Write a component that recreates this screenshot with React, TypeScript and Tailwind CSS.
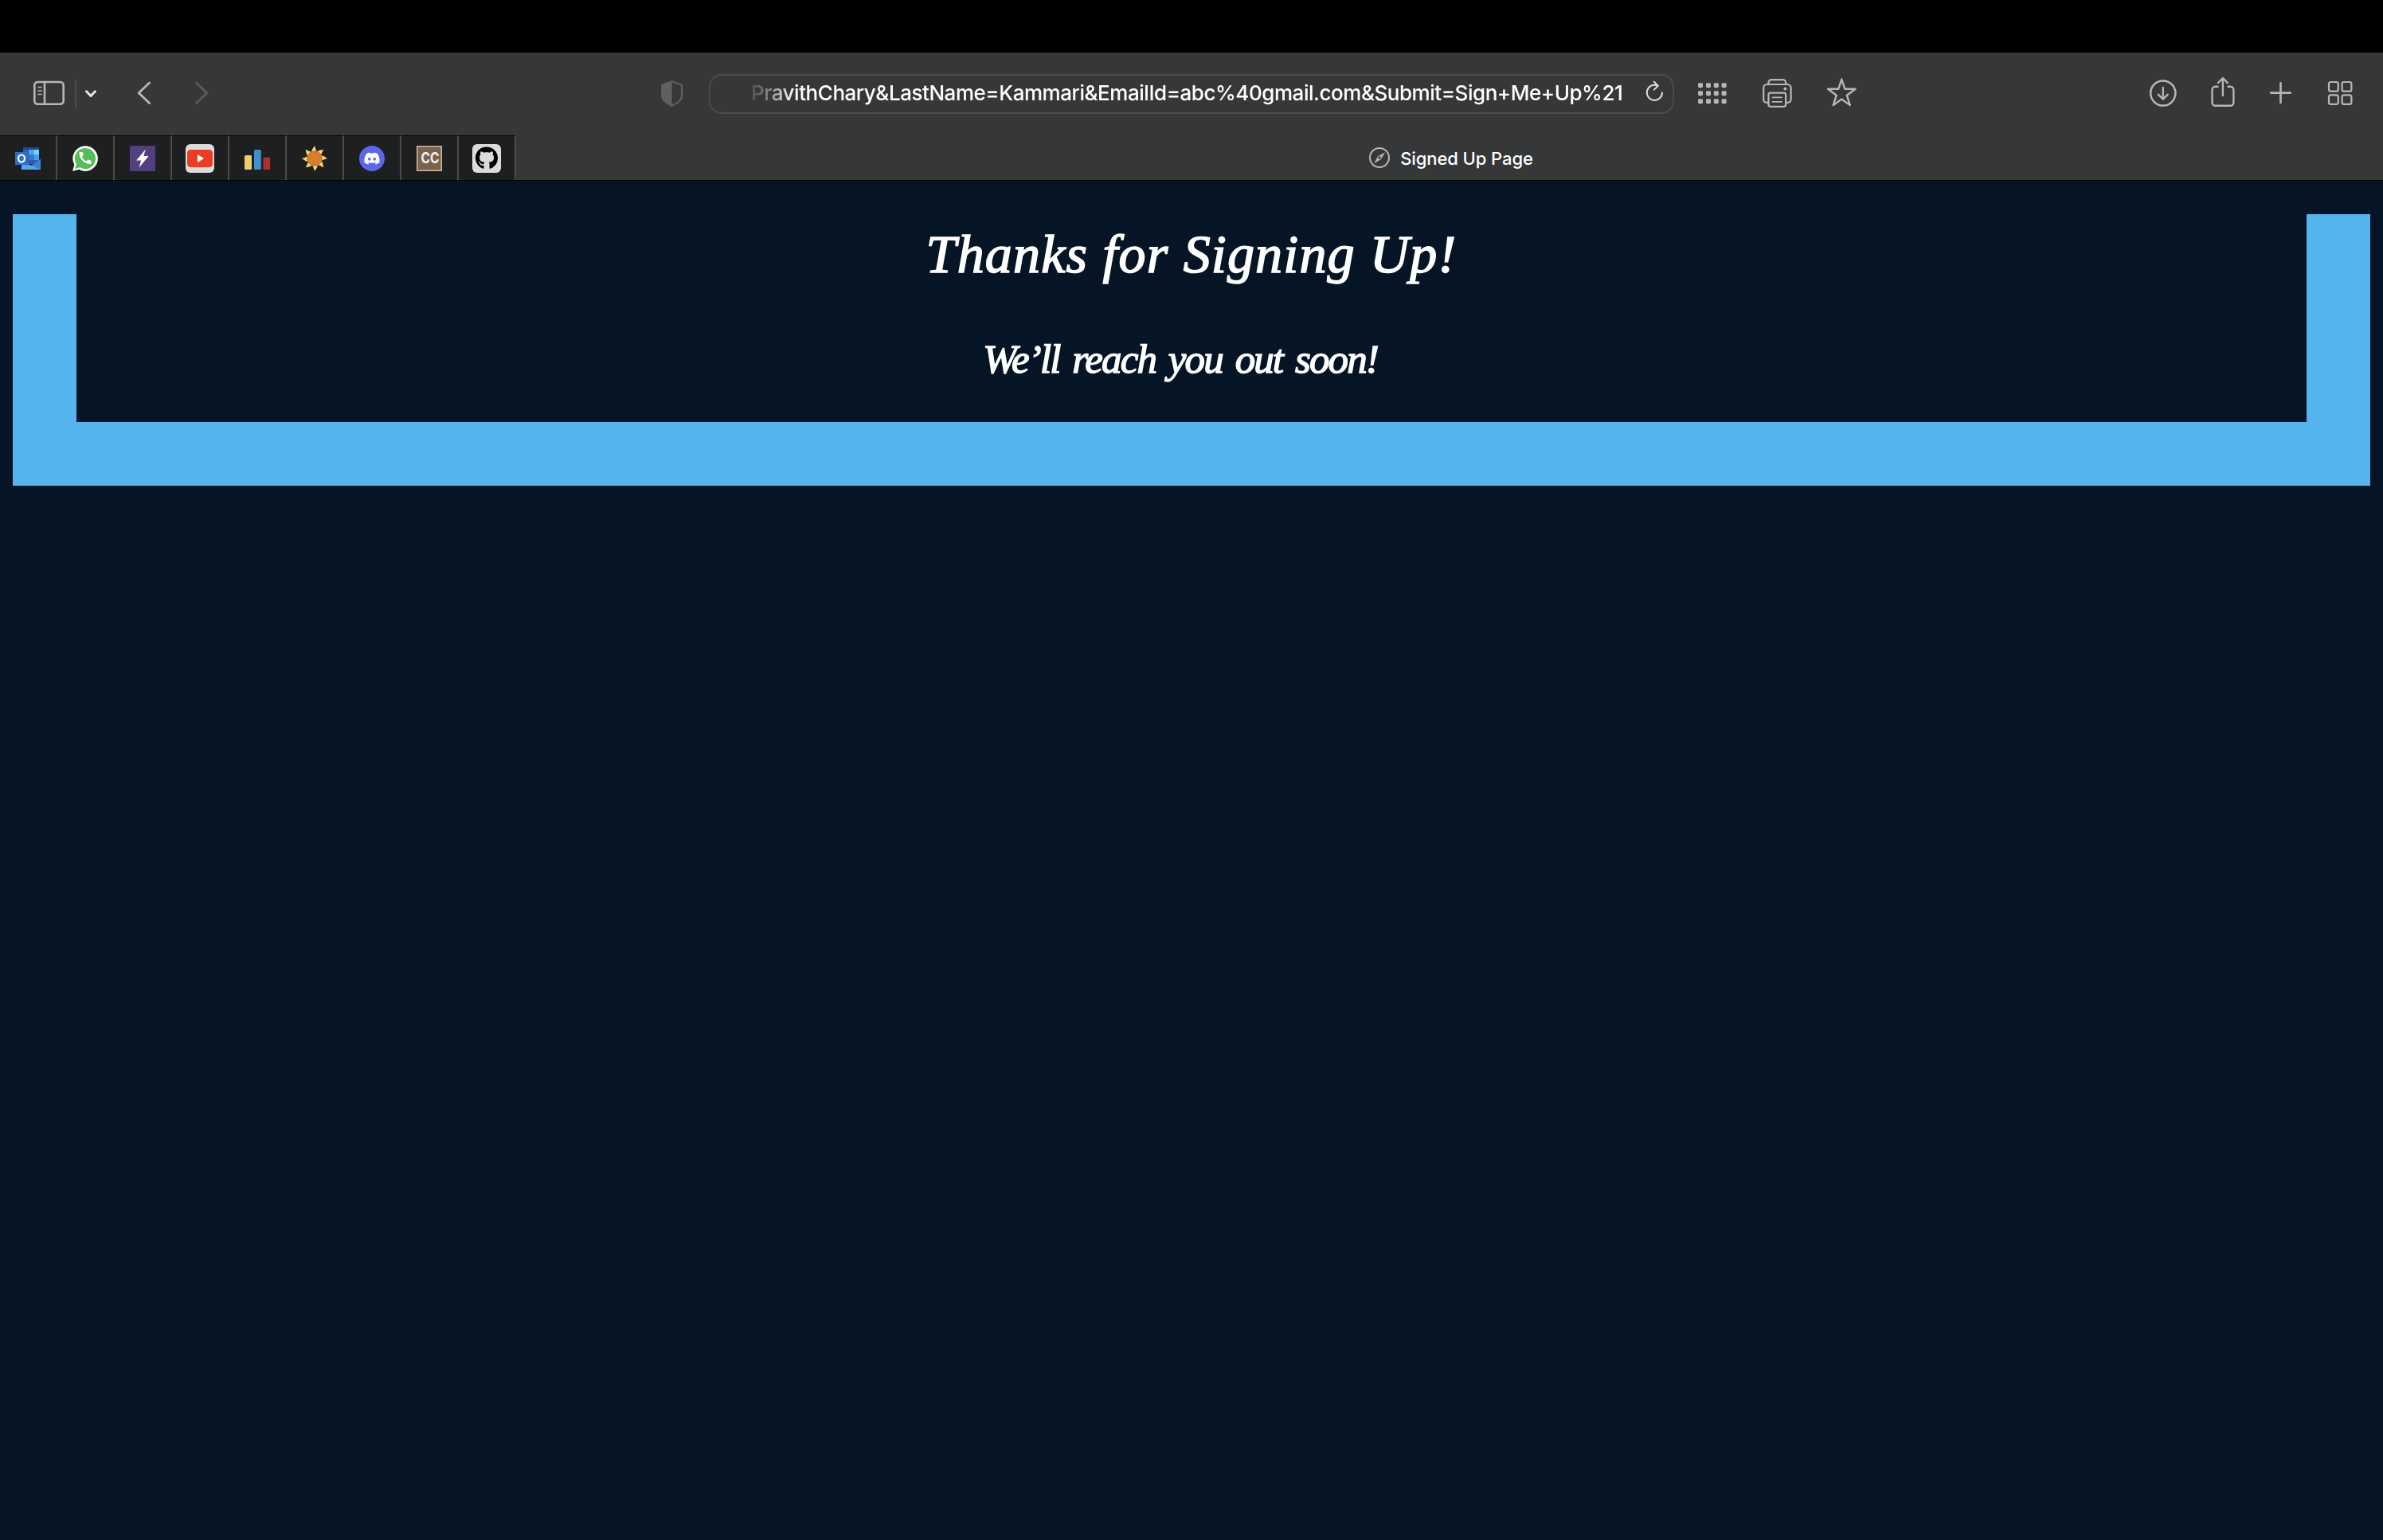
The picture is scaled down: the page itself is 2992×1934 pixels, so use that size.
import React from "react";
import { MdCall } from "react-icons/md";
import { SiDiscord } from "react-icons/si";
import { FaGithub } from "react-icons/fa";

const ICON = "#b6b7b8";

function Toolbar() {
  return (
    <div className="flex h-[104px] shrink-0 items-center bg-[#363739]">
      <svg className="ml-[36px] h-[104px] w-[52px] shrink-0" viewBox="36 66 52 104" fill="none" stroke={ICON} strokeWidth="2.6" strokeLinecap="round">
        <rect x="43.3" y="103" width="36.4" height="27.8" rx="4" />
        <path d="M56 103v27.8" />
        <path d="M48 109.5h4M48 114h4M48 118.5h4" strokeWidth="1.7" />
      </svg>
      <svg className="h-[104px] w-[42px] shrink-0" viewBox="88 66 42 104" fill="none" strokeLinecap="round" strokeLinejoin="round">
        <path d="M95 100v36" stroke="#4d4e50" strokeWidth="2" strokeLinecap="butt" />
        <path d="M108.5 114.8l5.5 5.7 5.5-5.7" stroke="#e6e6e6" strokeWidth="3" />
      </svg>
      <svg className="ml-[36px] h-[104px] w-[30px] shrink-0" viewBox="166 66 30 104" fill="none" stroke={ICON} strokeWidth="2.8" strokeLinecap="round" strokeLinejoin="round">
        <path d="M187.6 104l-13.4 12.8 13.4 12.8" />
      </svg>
      <svg className="ml-[42px] h-[104px] w-[30px] shrink-0" viewBox="238 66 30 104" fill="none" stroke="#5b5c5e" strokeWidth="2.8" strokeLinecap="round" strokeLinejoin="round">
        <path d="M246.4 104l13.4 12.8-13.4 12.8" />
      </svg>
      <svg className="ml-[556px] h-[104px] w-[40px] shrink-0" viewBox="824 66 40 104">
        <path d="M843.6 102.2l12.4 4.6v13.6c0 6-6.6 9.4-12.4 12.6-5.8-3.2-12.4-6.6-12.4-12.6v-13.6z" fill="none" stroke="#5f6062" strokeWidth="2.2" strokeLinejoin="round" />
        <path d="M843.6 102v31c-5.8-3.2-12.4-6.6-12.4-12.6v-13.6z" fill="#5f6062" />
      </svg>
      <div className="ml-[26px] flex h-[50px] w-[1212px] shrink-0 items-center rounded-[16px] border-2 border-[#4b4c4e]">
        <div className="ml-[51px] w-[1104px] whitespace-nowrap pb-[3px] font-['Inter',sans-serif] text-[26px] font-medium leading-[43px] tracking-[-0.46px] text-white [mask-image:linear-gradient(to_right,rgba(0,0,0,0.12)_0px,rgba(0,0,0,0.3)_16px,black_54px)]">
          PravithChary&amp;LastName=Kammari&amp;EmailId=abc%40gmail.com&amp;Submit=Sign+Me+Up%21
        </div>
        <svg className="ml-[16px] h-[46px] w-[30px] shrink-0" viewBox="2063 95 30 46" fill="none" stroke="#dedede" strokeWidth="2" strokeLinecap="round" strokeLinejoin="round">
          <path d="M2080.5 107.2a9.6 9.6 0 1 0 6.5 9.4" />
          <path d="M2076.8 102.8l5 4.9-5 4.9" />
        </svg>
      </div>
      <svg className="ml-[26px] h-[104px] w-[44px] shrink-0" viewBox="2128 66 44 104" fill={ICON}>
        {[2132, 2142, 2151.8, 2161.6].map((x) =>
          [104.2, 114.2, 124.2].map((y) => <rect key={`${x}-${y}`} x={x} y={y} width="6" height="6" rx="1.4" />)
        )}
      </svg>
      <svg className="ml-[36px] h-[104px] w-[48px] shrink-0" viewBox="2208 66 48 104" fill="none" stroke={ICON} strokeWidth="2.2" strokeLinecap="round" strokeLinejoin="round">
        <path d="M2220.5 106v-2.5a3.3 3.3 0 0 1 3.3-3.3h15a3.3 3.3 0 0 1 3.3 3.3v2.5" />
        <path d="M2220.5 128.8h-2.3a4 4 0 0 1-4-4v-14.6a4.2 4.2 0 0 1 4.2-4.2h26a4.2 4.2 0 0 1 4.2 4.2v14.6a4 4 0 0 1-4 4h-2.3" />
        <rect x="2220.5" y="116.6" width="21.6" height="17.2" rx="2.2" />
        <path d="M2225.5 122.4h11.6M2225.5 127.8h11.6" strokeWidth="1.8" />
        <circle cx="2241.4" cy="111.4" r="2" fill={ICON} stroke="none" />
      </svg>
      <svg className="ml-[32px] h-[104px] w-[48px] shrink-0" viewBox="2288 66 48 104" fill="none" stroke={ICON} strokeWidth="2.4" strokeLinejoin="round">
        <path d="M2312.3 99.5l4 12.2h13.2l-10.7 8 4 12.4-10.5-7.6-10.5 7.6 4-12.4-10.7-8h13.2z" />
      </svg>
      <svg className="ml-[358px] h-[104px] w-[44px] shrink-0" viewBox="2694 66 44 104" fill="none" stroke={ICON} strokeWidth="2.5" strokeLinecap="round" strokeLinejoin="round">
        <circle cx="2715.8" cy="117" r="15.6" />
        <path d="M2715.8 109.8v14.6M2709.8 118.6l6 6 6-6" strokeWidth="2.3" />
      </svg>
      <svg className="ml-[32px] h-[104px] w-[42px] shrink-0" viewBox="2770 66 42 104" fill="none" stroke={ICON} strokeWidth="2.4" strokeLinecap="round" strokeLinejoin="round">
        <path d="M2784.5 108.8h-3a4 4 0 0 0-4 4v16a4 4 0 0 0 4 4h18.9a4 4 0 0 0 4-4v-16a4 4 0 0 0-4-4h-3" />
        <path d="M2790.9 120v-21M2785 104l5.9-5.9 5.9 5.9" />
      </svg>
      <svg className="ml-[34px] h-[104px] w-[36px] shrink-0" viewBox="2846 66 36 104" stroke={ICON} strokeWidth="2.6" strokeLinecap="round">
        <path d="M2863.5 104.2v24.8M2851.2 116.6h24.6" />
      </svg>
      <svg className="ml-[36px] h-[104px] w-[40px] shrink-0" viewBox="2918 66 40 104" fill="none" stroke={ICON} strokeWidth="2.2">
        <rect x="2924" y="103" width="11.8" height="11.6" rx="2.4" />
        <rect x="2940.6" y="103" width="11.8" height="11.6" rx="2.4" />
        <rect x="2924" y="119.3" width="11.8" height="11.6" rx="2.4" />
        <rect x="2940.6" y="119.3" width="11.8" height="11.6" rx="2.4" />
      </svg>
    </div>
  );
}

function PinnedTab({ children }: { children: React.ReactNode }) {
  return (
    <div className="h-[56px] w-[72px] shrink-0 border-r-2 border-t border-r-[#4a4b4d] border-t-black bg-[#1e1f21]">
      <svg className="h-[55px] w-[70px]" viewBox="0 0 70 55">
        {children}
      </svg>
    </div>
  );
}

function sunRays() {
  const rays: string[] = [];
  for (let i = 0; i < 8; i++) {
    const a = (i * Math.PI) / 4 - Math.PI / 2;
    const p = (r: number, t: number) => `${(35 + r * Math.cos(a + t)).toFixed(1)} ${(28 + r * Math.sin(a + t)).toFixed(1)}`;
    rays.push(`M${p(9, -0.5)}Q${p(12, -0.3)} ${p(16, 0)}Q${p(12, 0.1)} ${p(9, 0.3)}Z`);
  }
  return rays.join("");
}

function TabBar() {
  return (
    <div className="flex h-[57px] shrink-0 border-b border-black bg-[#363739]">
      <PinnedTab>
        <rect x="29" y="14" width="20" height="21" fill="#2a5db0" />
        <rect x="29" y="14" width="20" height="3" fill="#1c4a91" />
        <rect x="36" y="17" width="6.5" height="6.5" fill="#50a4e8" />
        <rect x="42.5" y="17" width="6.5" height="6.5" fill="#76d4fb" />
        <rect x="36" y="23.5" width="6.5" height="6.5" fill="#2f79d0" />
        <rect x="42.5" y="23.5" width="6.5" height="6.5" fill="#4c9fe3" />
        <path d="M27 30l12 7 12-8.5v13.5h-24z" fill="#3a84d6" />
        <path d="M27 42v-6l12 .5 12 5.5z" fill="#55a7ea" />
        <rect x="19" y="20" width="16" height="16" rx="0.8" fill="#2b6fcb" />
        <ellipse cx="27" cy="28" rx="4" ry="4.5" fill="none" stroke="#fff" strokeWidth="2.2" />
      </PinnedTab>
      <PinnedTab>
        <path d="M19 44l2.3-8.2A15.8 15.8 0 1 1 27.2 41.8z" fill="#fff" />
        <path d="M22 41l1.9-6A13.1 13.1 0 1 1 28.3 39.3z" fill="#57bd58" />
        <MdCall x="25" y="17.5" size={20} color="#fff" />
      </PinnedTab>
      <PinnedTab>
        <rect x="19" y="12" width="32" height="32" fill="#533f7b" />
        <path d="M38.8 16.5L27.2 30.6h6l-2.6 9 12-14.6h-6.3z" fill="#fff" />
      </PinnedTab>
      <PinnedTab>
        <rect x="17" y="10" width="36" height="36" rx="6" fill="#dcdcdc" />
        <rect x="19" y="17" width="32" height="22" rx="4.5" fill="#ea3d25" />
        <path d="M32 23v10l8-5z" fill="#fff" />
      </PinnedTab>
      <PinnedTab>
        <rect x="19" y="24" width="9" height="18" rx="1.5" fill="#f0cd68" />
        <rect x="31" y="17" width="8.8" height="25" rx="1.5" fill="#4190cc" />
        <rect x="42.5" y="26.5" width="8.7" height="15.5" rx="1.5" fill="#b12d2e" />
      </PinnedTab>
      <PinnedTab>
        <path d={sunRays()} fill="#f1dc72" />
        <circle cx="35" cy="28" r="9.3" fill="#db7c30" stroke="#a8672c" strokeWidth="0.8" />
      </PinnedTab>
      <PinnedTab>
        <circle cx="35" cy="28" r="16" fill="#5b66e8" />
        <SiDiscord x="25.25" y="18.25" size={19.5} color="#fff" />
      </PinnedTab>
      <PinnedTab>
        <rect x="19.8" y="12.8" width="30.4" height="30.4" fill="#79634e" stroke="#cbb29d" strokeWidth="1.6" />
        <text x="36" y="34" textAnchor="middle" textLength="23" lengthAdjust="spacingAndGlyphs" className="fill-[#f7f2ec] font-['Inter',sans-serif] text-[19px] font-bold">CC</text>
      </PinnedTab>
      <PinnedTab>
        <rect x="17" y="10" width="36" height="36" rx="6" fill="#dcdcdc" />
        <FaGithub x="20.5" y="13" size={29} color="#000" />
      </PinnedTab>
      <div className="flex flex-1 items-center justify-center gap-[12px] pl-[3px] pt-[2px]">
        <svg className="h-[28px] w-[28px]" viewBox="0 0 28 28">
          <circle cx="14" cy="13" r="12" fill="none" stroke={ICON} strokeWidth="2" />
          <path d="M21 6.3L16 15l-8.8 5.2L12 11.2z" fill={ICON} />
          <circle cx="14" cy="13" r="1.7" fill="#363739" />
        </svg>
        <span className="whitespace-nowrap font-['Inter',sans-serif] text-[22px] font-medium leading-[30px] tracking-[-0.08px] text-white">Signed Up Page</span>
      </div>
    </div>
  );
}

export default function App() {
  return (
    <div className="flex h-[1934px] w-[2992px] flex-col overflow-hidden bg-[#051525]">
      <div className="h-[66px] shrink-0 bg-black" />
      <Toolbar />
      <TabBar />
      <main className="mx-[16px] mt-[42px] h-[341px] border-x-[80px] border-b-[80px] border-[#54b4ed] text-center font-['Liberation_Serif',serif] italic text-white">
        <h1 className="h-[132px] whitespace-nowrap text-[68px] leading-[101px] tracking-[1.2px] [-webkit-text-stroke:1.6px_white]">Thanks for Signing Up!</h1>
        <h2 className="mr-[28px] whitespace-nowrap text-[51px] leading-[101px] tracking-[-1.9px] [word-spacing:5px] [-webkit-text-stroke:1.4px_white]">We’ll reach you out soon!</h2>
      </main>
    </div>
  );
}
